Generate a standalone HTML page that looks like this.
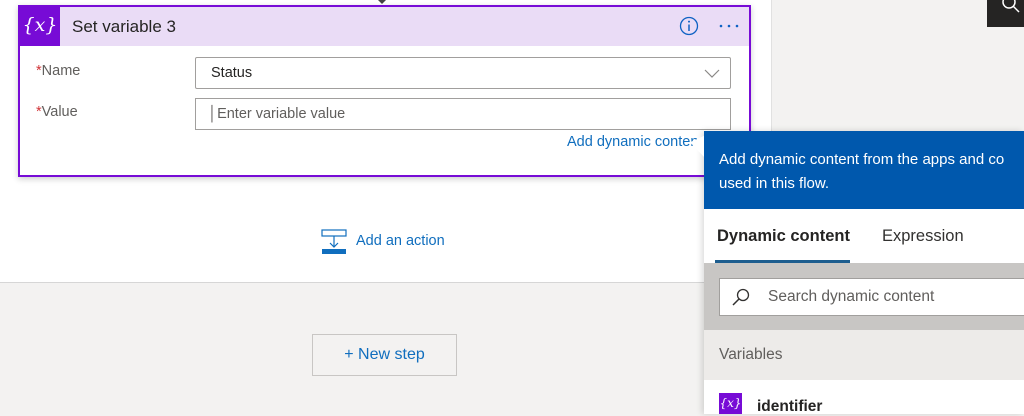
<!DOCTYPE html><html><head><style>
*{margin:0;padding:0;box-sizing:border-box}
body{width:1024px;height:414px;overflow:hidden;position:relative;background:#f3f2f1;font-family:"Segoe UI","Liberation Sans",sans-serif}
.a{position:absolute}
</style></head><body>
<div class="a" style="left:0;top:0;width:771px;height:283px;background:#fff;border-bottom:1px solid #d6d6d6"></div>
<div class="a" style="left:771px;top:0;width:253px;height:131px;background:#f3f2f1;border-left:1px solid #e1e1e1"></div>
<div class="a" style="left:987px;top:0;width:37px;height:27px;background:#252423"></div>
<svg class="a" style="left:995px;top:0" width="29" height="20"><circle cx="14" cy="2" r="6" stroke="#fff" stroke-width="1.5" fill="none"/><line x1="18" y1="6" x2="24" y2="12" stroke="#fff" stroke-width="1.5"/></svg>
<div class="a" style="left:378px;top:0;width:8px;height:4px;background:#444;clip-path:polygon(0 0,100% 0,50% 100%)"></div>
<!-- card -->
<div class="a" style="left:18px;top:5px;width:733px;height:172px;border:2px solid #770bd6;background:#fff;box-shadow:0 2px 6px rgba(0,0,0,.2)"></div>
<div class="a" style="left:20px;top:7px;width:729px;height:39px;background:#eadcf6"></div>
<div class="a" style="left:20px;top:7px;width:40px;height:39px;background:#770bd6;color:#fff;font-family:'DejaVu Serif',serif;font-size:19px;line-height:37px;text-align:center;font-style:italic">{<i>x</i>}</div>
<div class="a" style="left:72px;top:17px;font-size:17px;color:#252423">Set variable 3</div>
<svg class="a" style="left:679px;top:16px" width="20" height="20"><circle cx="10" cy="10" r="8.5" fill="none" stroke="#0f62c4" stroke-width="1.3"/><line x1="10" y1="8.5" x2="10" y2="15" stroke="#0f62c4" stroke-width="1.5"/><circle cx="10" cy="5.6" r="1" fill="#0f62c4"/></svg>
<svg class="a" style="left:719px;top:24px" width="20" height="4"><circle cx="2" cy="2" r="1.3" fill="#0f62c4"/><circle cx="10" cy="2" r="1.3" fill="#0f62c4"/><circle cx="18" cy="2" r="1.3" fill="#0f62c4"/></svg>
<div class="a" style="left:36px;top:63px;font-size:14.5px;color:#605e5c"><span style="color:#d13438">*</span>Name</div>
<div class="a" style="left:36px;top:104px;font-size:14.5px;color:#605e5c"><span style="color:#d13438">*</span>Value</div>
<div class="a" style="left:195px;top:57px;width:536px;height:32px;border:1px solid #a19f9d;border-radius:2px;font-size:14.5px;color:#252423;padding:7px 15px">Status</div>
<svg class="a" style="left:704px;top:69px" width="16" height="10"><path d="M1 1L8 8L15 1" fill="none" stroke="#8a8886" stroke-width="1.2"/></svg>
<div class="a" style="left:195px;top:98px;width:536px;height:32px;border:1px solid #a19f9d;font-size:14.5px;color:#605e5c;padding:7px 12px">│Enter variable value</div>
<div class="a" style="left:567px;top:134px;font-size:14.5px;color:#106ebe;white-space:nowrap;width:130px;overflow:hidden">Add dynamic content</div>
<svg class="a" style="left:321px;top:229px" width="26" height="26"><rect x="1" y="1" width="24" height="6" fill="none" stroke="#106ebe" stroke-width="1.2"/><line x1="13" y1="7" x2="13" y2="18" stroke="#106ebe" stroke-width="1.2"/><path d="M9 14L13 18L17 14" fill="none" stroke="#106ebe" stroke-width="1.2"/><rect x="1" y="20" width="24" height="5" fill="#106ebe"/></svg>
<div class="a" style="left:356px;top:233px;font-size:14.5px;color:#106ebe">Add an action</div>
<div class="a" style="left:312px;top:334px;width:145px;height:42px;border:1px solid #c8c6c4;background:#f3f2f1;font-size:16px;color:#106ebe;text-align:center;line-height:40px">+ New step</div>
<!-- panel -->
<div class="a" style="left:704px;top:131px;width:320px;height:283px;background:#fff;box-shadow:-2px 0 6px rgba(0,0,0,.15)"></div>
<div class="a" style="left:690px;top:135px;width:16px;height:24px;background:#fff;clip-path:polygon(100% 0,0 30%,100% 100%)"></div>
<div class="a" style="left:704px;top:131px;width:320px;height:78px;background:#0058ad;color:#fff;font-size:15px;line-height:24px;padding:17px 0 0 15px;white-space:nowrap;overflow:hidden">Add dynamic content from the apps and co<br>used in this flow.</div>
<div class="a" style="left:717px;top:227px;font-size:16.5px;color:#252423;font-weight:600">Dynamic content</div>
<div class="a" style="left:882px;top:227px;font-size:16.5px;color:#323130">Expression</div>
<div class="a" style="left:715px;top:260px;width:135px;height:3px;background:#1d5e8f"></div>
<div class="a" style="left:704px;top:263px;width:320px;height:67px;background:#c8c6c4"></div>
<div class="a" style="left:719px;top:278px;width:305px;height:38px;background:#fff;border:1px solid #a19f9d;border-right:none;font-size:15.5px;color:#605e5c;padding:9px 0 0 48px">Search dynamic content</div>
<svg class="a" style="left:731px;top:287px" width="20" height="20"><circle cx="12" cy="8" r="5.5" fill="none" stroke="#323130" stroke-width="1.3"/><line x1="8" y1="12" x2="2" y2="18" stroke="#323130" stroke-width="1.5"/></svg>
<div class="a" style="left:704px;top:330px;width:320px;height:50px;background:#edebe9;font-size:15.5px;color:#605e5c;padding:16px 0 0 15px">Variables</div>
<div class="a" style="left:719px;top:393px;width:23px;height:21px;background:#770bd6;color:#fff;font-size:12px;text-align:center;line-height:20px;font-family:'DejaVu Serif',serif;font-style:italic">{x}</div>
<div class="a" style="left:757px;top:398px;font-size:15.5px;font-weight:600;color:#252423">identifier</div>
</body></html>
